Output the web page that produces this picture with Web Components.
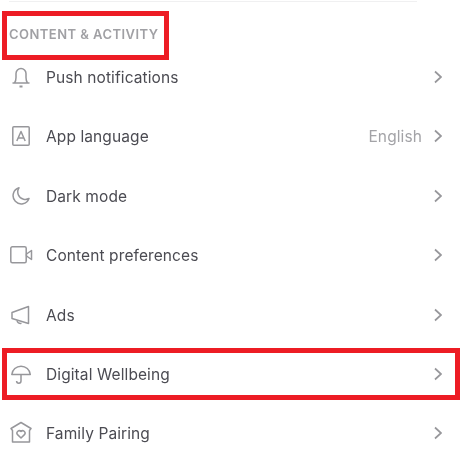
<!DOCTYPE html>
<html>
<head>
<meta charset="utf-8">
<title>Content & activity</title>
<style>
    html, body { margin: 0; background: #fff; }
    body { width: 464px; height: 470px; overflow: hidden; font-family: Inter, "Open Sans", sans-serif; }
</style>
</head>
<body>
<settings-list>
    <section-title slot="title">CONTENT &amp; ACTIVITY</section-title>

    <setting-row>
        <svg slot="icon" viewBox="0 0 24 24"><path d="M3.500 18h17M5.500 18c1.200-1.500 1.500-3 1.500-5.500V8.500a5 5 0 0 1 10 0v4c0 2.500.3 4 1.500 5.500"/><path d="M10.500 21.500h3" stroke-width="2"/></svg>
        Push notifications
    </setting-row>
    <setting-row>
        <svg slot="icon" viewBox="0 0 24 24"><rect x="3.800" y="2.800" width="16.400" height="18.400" rx="1"/><path d="M7.800 17 12 7.500 16.200 17M9.300 14h5.400"/></svg>
        App language
        <span slot="value">English</span>
    </setting-row>
    <setting-row>
        <svg slot="icon" viewBox="0 0 24 24"><path d="M10 3.800a8.200 8.200 0 1 0 10 10.700 8 8 0 0 1-5.500.7A7.500 7.500 0 0 1 10 3.800z"/></svg>
        Dark mode
    </setting-row>
    <setting-row>
        <svg slot="icon" viewBox="0 0 24 24"><rect x="1.800" y="3.800" width="15.400" height="16" rx="1.500"/><path d="M17.500 11 22.500 7.500v9l-5-3.500z"/></svg>
        Content preferences
    </setting-row>
    <setting-row>
        <svg slot="icon" viewBox="0 0 24 24"><path d="M19.500 3.500v17L3 15.500v-6z"/><path d="M8 17.500c.3 2 2 3.200 4.500 2.800"/></svg>
        Ads
    </setting-row>
    <setting-row highlight>
        <svg slot="icon" viewBox="0 0 24 24"><path d="M2.800 12.500a9.300 9.300 0 0 1 18.500 0z"/><path d="M12 12.500v6.500a2.200 2.200 0 0 1-4.400 0"/></svg>
        Digital Wellbeing
    </setting-row>
    <setting-row>
        <svg slot="icon" viewBox="0 0 24 24"><path d="M12 1.500 22 7.500 20.500 9.500V21H3.500V9.500L2 7.500z"/><path d="M12 17 8.300 13.400a2.400 2.400 0 0 1 3.700-3 2.400 2.400 0 0 1 3.700 3z"/></svg>
        Family Pairing
    </setting-row>
</settings-list>

<script>
// list wrapper, holds the top rule, the title and the rows
class SettingsList extends HTMLElement {
    constructor() {
        super();
        const template = document.createElement('template');
        template.innerHTML = `
            <style>
                :host {
                    display: block;
                    padding-top: 1px;
                }
                .rule {
                    height: 1px;
                    margin: 0 47px 0 9px;
                    background: #f0f0f1;
                }
                .rows {
                    display: flex;
                    flex-direction: column;
                    gap: 17.4px;
                    margin: 1px 9px 0 7px;
                }
            </style>
            <div class="rule"></div>
            <slot name="title"></slot>
            <div class="rows"><slot></slot></div>
            `;
        this.attachShadow({ mode: 'open' });
        this.shadowRoot.appendChild(template.content.cloneNode(true));
    }
}
customElements.define('settings-list', SettingsList);

class SectionTitle extends HTMLElement {
    constructor() {
        super();
        const template = document.createElement('template');
        template.innerHTML = `
            <style>
                :host {
                    display: flex;
                    align-items: center;
                    box-sizing: border-box;
                    width: 157px;
                    height: 39px;
                    margin: 14px 0 1px 7px;
                    padding: 0 0 4px 2px;
                    outline: 5px solid #ed1c24;
                    font-size: 13px;
                    font-weight: 600;
                    letter-spacing: .45px;
                    color: #a0a0a4;
                    white-space: nowrap;
                }
                span { filter: blur(.3px); }
            </style>
            <span><slot></slot></span>
            `;
        this.attachShadow({ mode: 'open' });
        this.shadowRoot.appendChild(template.content.cloneNode(true));
    }
}
customElements.define('section-title', SectionTitle);

// one settings line: icon, label, optional value, chevron
class SettingRow extends HTMLElement {
    constructor() {
        super();
        const template = document.createElement('template');
        template.innerHTML = `
            <style>
                :host {
                    display: flex;
                    align-items: center;
                    box-sizing: border-box;
                    height: 42px;
                    padding: 0 13px 0 2px;
                    font-size: 15.5px;
                    letter-spacing: .1px;
                    color: #4b4b52;
                }
                :host([highlight]) {
                    outline: 5px solid #ed1c24;
                }
                .icon {
                    display: flex;
                    flex: none;
                    width: 24px;
                    height: 24px;
                    margin-right: 13px;
                    filter: blur(.3px);
                }
                ::slotted(svg) {
                    width: 24px;
                    height: 24px;
                    fill: none;
                    stroke: #97979b;
                    stroke-width: 1.500;
                    stroke-linejoin: round;
                }
                .label {
                    flex: 1;
                    padding-top: 1px;
                    filter: blur(.3px);
                }
                .value {
                    color: #a3a3a7;
                    margin-right: 12px;
                    padding-top: 1px;
                    filter: blur(.3px);
                }
                .chevron {
                    width: 8px;
                    height: 14px;
                    fill: none;
                    stroke: #97979b;
                    stroke-width: 1.700;
                }
            </style>
            <span class="icon"><slot name="icon"></slot></span>
            <span class="label"><slot></slot></span>
            <span class="value"><slot name="value"></slot></span>
            <svg class="chevron" viewBox="0 0 8 14"><path d="M1 1.500 7 7 1 12.500"/></svg>
            `;
        this.attachShadow({ mode: 'open' });
        this.shadowRoot.appendChild(template.content.cloneNode(true));
    }
}
customElements.define('setting-row', SettingRow);
</script>
</body>
</html>
